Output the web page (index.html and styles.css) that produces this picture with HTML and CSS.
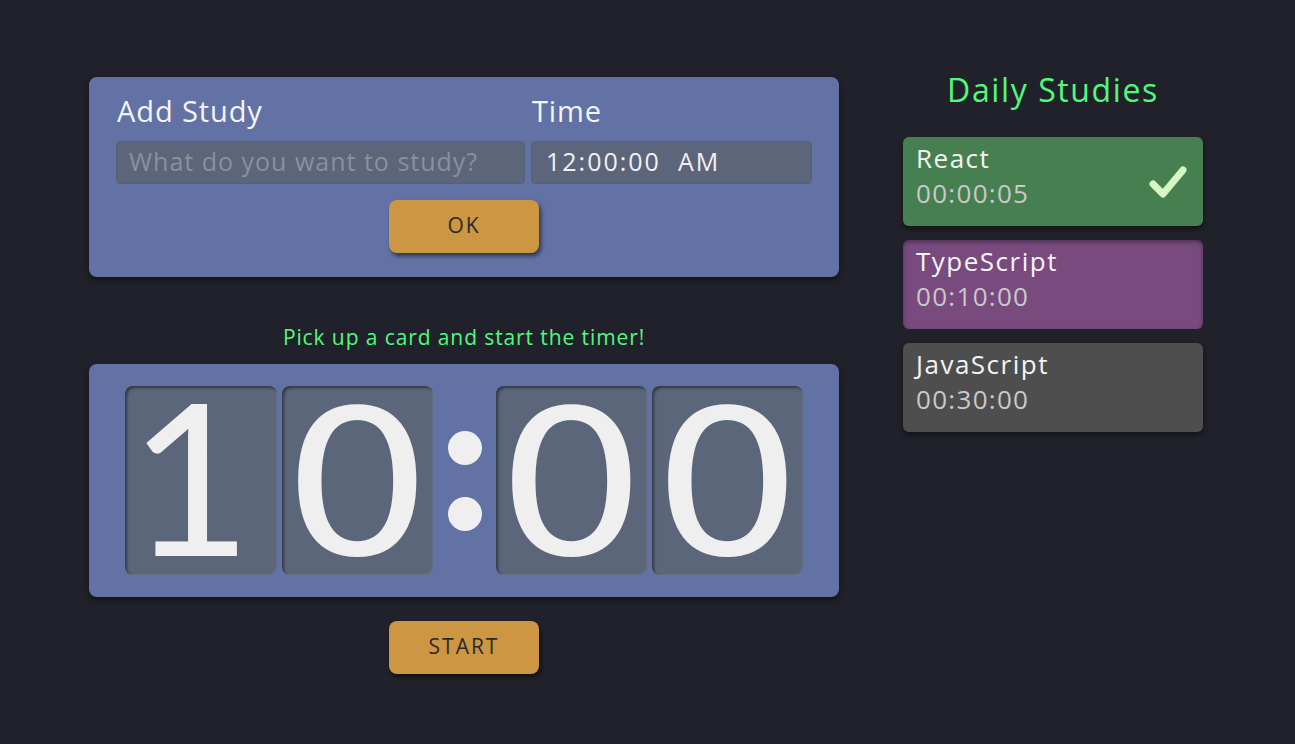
FILE: index.html
```html
<!DOCTYPE html>
<html lang="en">
<head>
<meta charset="utf-8">
<title>Study Timer</title>
<link rel="stylesheet" href="styles.css">
</head>
<body>
<main class="app">
  <section class="left">
    <form class="add-card">
      <div class="field field-study">
        <label class="label" for="study">Add Study</label>
        <input class="input" id="study" type="text" placeholder="What do you want to study?">
      </div>
      <div class="field field-time">
        <label class="label" for="time">Time</label>
        <div class="input input-time" id="time">12:00:00&nbsp;&nbsp;AM</div>
      </div>
      <div class="actions">
        <button type="button" class="btn">OK</button>
      </div>
    </form>

    <p class="hint">Pick up a card and start the timer!</p>

    <div class="timer">
      <div class="digit digit-one"><span>1</span></div>
      <div class="digit"><span>0</span></div>
      <div class="colon"><i></i><i></i></div>
      <div class="digit"><span>0</span></div>
      <div class="digit"><span>0</span></div>
    </div>

    <div class="start-row">
      <button type="button" class="btn">START</button>
    </div>
  </section>

  <aside class="right">
    <h2 class="title">Daily Studies</h2>
    <ul class="list">
      <li class="study study-done">
        <div class="study-text">
          <div class="study-name">React</div>
          <div class="study-time">00:00:05</div>
        </div>
        <svg class="check" width="40" height="36" viewBox="0 0 40 36">
          <path d="M5 20 L15 30 L35 6" fill="none" stroke="#d6f7c3" stroke-width="7" stroke-linecap="round" stroke-linejoin="round"/>
        </svg>
      </li>
      <li class="study study-active">
        <div class="study-text">
          <div class="study-name">TypeScript</div>
          <div class="study-time">00:10:00</div>
        </div>
      </li>
      <li class="study study-idle">
        <div class="study-text">
          <div class="study-name">JavaScript</div>
          <div class="study-time">00:30:00</div>
        </div>
      </li>
    </ul>
  </aside>
</main>
</body>
</html>
```

FILE: styles.css
```css
* { box-sizing: border-box; }

html, body {
  margin: 0;
  padding: 0;
  background: #21212b;
  height: 100%;
}

body {
  font-family: "Open Sans", "Noto Sans", sans-serif;
  color: #f1f1f1;
}

.app {
  display: flex;
  align-items: flex-start;
  gap: 64px;
  padding: 77px 0 0 89px;
}

.left {
  width: 750px;
  display: flex;
  flex-direction: column;
}

.add-card {
  background: #6272a4;
  border-radius: 8px;
  box-shadow: 0 3px 6px rgba(0, 0, 0, 0.45);
  padding: 16px 27px 24px 27px;
  display: grid;
  grid-template-columns: 409px 281px;
  column-gap: 6px;
  margin: 0;
}

.field {
  display: flex;
  flex-direction: column;
}

.label {
  font-size: 29px;
  line-height: 36px;
  padding-left: 1px;
  margin-bottom: 12px;
  color: #f4f4f4;
  letter-spacing: 0.9px;
}

.input {
  height: 43px;
  background: #5c6579;
  border: 1px solid #56607a;
  border-radius: 4px;
  font-family: inherit;
  font-size: 25px;
  letter-spacing: 1px;
  color: #f1f1f1;
  padding: 0 12px 3px 12px;
  outline: none;
  display: flex;
  align-items: center;
}

.input::placeholder {
  color: #8c909c;
}

.input-time {
  padding-left: 14px;
  letter-spacing: 2px;
}

.actions {
  grid-column: 1 / 3;
  display: flex;
  justify-content: center;
  padding-top: 16px;
}

.btn {
  width: 150px;
  height: 53px;
  background: #cd9642;
  border: none;
  border-radius: 8px;
  box-shadow: 2px 3px 4px rgba(0, 0, 0, 0.55);
  font-family: inherit;
  font-size: 21px;
  color: #2a2a2a;
  letter-spacing: 2px;
  padding: 0 0 4px 0;
  cursor: pointer;
}

.hint {
  margin: 48px 0 0 0;
  text-align: center;
  color: #50fa7b;
  font-size: 21px;
  line-height: 24px;
  letter-spacing: 0.9px;
}

.timer {
  margin-top: 15px;
  background: #6272a4;
  border-radius: 8px;
  box-shadow: 0 3px 6px rgba(0, 0, 0, 0.45);
  padding: 22px 36px;
  display: flex;
  gap: 5px;
  height: 233px;
}

.digit {
  width: 151px;
  height: 189px;
  background: #5c667b;
  border-radius: 8px;
  box-shadow: inset 2px 2px 3px rgba(0, 0, 0, 0.45), inset -1px -1px 1px rgba(255, 255, 255, 0.08);
  display: flex;
  justify-content: center;
  align-items: flex-start;
}

.digit span {
  display: block;
  height: 189px;
  line-height: 189px;
  font-family: "DejaVu Sans", "Open Sans", sans-serif;
  font-size: 202px;
  color: #efefef;
  margin-top: 4px;
  transform: scaleX(1.16);
}

.digit-one {
  width: 152px;
  justify-content: flex-start;
  padding-left: 4px;
}

.digit-one span {
  font-family: "Lato", "Open Sans", sans-serif;
  font-size: 212px;
  margin-top: -6px;
  transform: none;
}

.colon {
  width: 53px;
  height: 189px;
  display: flex;
  flex-direction: column;
  align-items: center;
  justify-content: center;
  gap: 32px;
}

.colon i {
  display: block;
  width: 34px;
  height: 34px;
  border-radius: 50%;
  background: #efefef;
}

.start-row {
  display: flex;
  justify-content: center;
  margin-top: 24px;
}

.right {
  width: 300px;
  display: flex;
  flex-direction: column;
}

.title {
  margin: 0;
  font-weight: normal;
  text-align: center;
  color: #50fa7b;
  font-size: 32px;
  line-height: 26px;
  letter-spacing: 1.6px;
}

.list {
  list-style: none;
  margin: 34px 0 0 0;
  padding: 0;
  display: flex;
  flex-direction: column;
  gap: 14px;
}

.study {
  height: 89px;
  border-radius: 6px;
  padding: 0 13px 12px 13px;
  display: flex;
  align-items: center;
  justify-content: space-between;
  box-shadow: 0 3px 5px rgba(0, 0, 0, 0.45);
}

.study-name {
  font-size: 26px;
  line-height: 35px;
  color: #f4f4f4;
  letter-spacing: 1.5px;
}

.study-time {
  font-size: 26px;
  line-height: 35px;
  color: #c9c9c9;
  letter-spacing: 1.3px;
}

.study-done { background: #478050; }
.study-active {
  background: #784a7e;
  box-shadow: inset 0 2px 4px rgba(0, 0, 0, 0.35);
}
.study-idle { background: #4e4e4e; }

.check {
  margin-right: 2px;
  margin-top: 12px;
}
```
